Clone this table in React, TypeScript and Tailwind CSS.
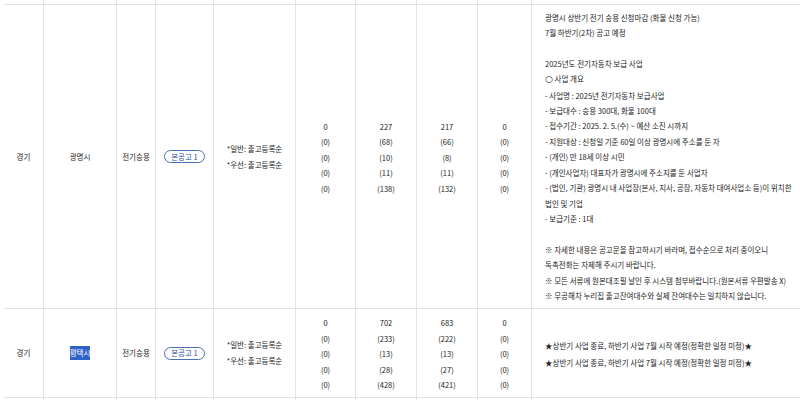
const COLS = 'grid grid-cols-[40px_73px_39px_58px_82px_60px_61px_61px_54px_268px]'
const CELL = 'border-r border-[#e3e3e3] flex items-center justify-center text-center'

type Row = {
  region: string
  city: string
  highlight?: boolean
  nums: string[][]
  notes: React.ReactNode
  height: string
}

const rows: Row[] = [
  {
    region: '경기',
    city: '광명시',
    nums: [
      ['0', '(0)', '(0)', '(0)', '(0)'],
      ['227', '(68)', '(10)', '(11)', '(138)'],
      ['217', '(66)', '(8)', '(11)', '(132)'],
      ['0', '(0)', '(0)', '(0)', '(0)'],
    ],
    height: 'h-[304px]',
    notes: (
      <div className="leading-[15.4px]">
        <p>광명시 상반기 전기 승용 신청마감 (화물 신청 가능)</p>
        <p>7월 하반기(2차) 공고 예정</p>
        <p>&nbsp;</p>
        <p>2025년도 전기자동차 보급 사업</p>
        <p>
          <span className="text-[9px]" style={{ fontFamily: '"DejaVu Sans", sans-serif' }}>○</span> 사업 개요
        </p>
        <p>- 사업명 : 2025년 전기자동차 보급사업</p>
        <p>- 보급대수 : 승용 300대, 화물 100대</p>
        <p>- 접수기간 : 2025. 2. 5.(수) ~ 예산 소진 시까지</p>
        <p>- 지원대상 : 신청일 기준 60일 이상 광명시에 주소를 둔 자</p>
        <p>- (개인) 만 18세 이상 시민</p>
        <p>- (개인사업자) 대표자가 광명시에 주소지를 둔 사업자</p>
        <p>- (법인, 기관) 광명시 내 사업장(본사, 지사, 공장, 자동차 대여사업소 등)이 위치한</p>
        <p>법인 및 기업</p>
        <p>- 보급기준 : 1대</p>
        <p>&nbsp;</p>
        <p>※ 자세한 내용은 공고문을 참고하시기 바라며, 접수순으로 처리 중이오니</p>
        <p>독촉전화는 자제해 주시기 바랍니다.</p>
        <p>※ 모든 서류에 원본대조필 날인 후 시스템 첨부바랍니다.(원본서류 우편발송 X)</p>
        <p>※ 무공해차 누리집 출고잔여대수와 실제 잔여대수는 일치하지 않습니다.</p>
      </div>
    ),
  },
  {
    region: '경기',
    city: '평택시',
    highlight: true,
    nums: [
      ['0', '(0)', '(0)', '(0)', '(0)'],
      ['702', '(233)', '(13)', '(28)', '(428)'],
      ['683', '(222)', '(13)', '(27)', '(421)'],
      ['0', '(0)', '(0)', '(0)', '(0)'],
    ],
    height: 'h-[89px]',
    notes: (
      <div className="leading-[17px] pt-[2px]">
        <p>★상반기 사업 종료, 하반기 사업 7월 시작 예정(정확한 일정 미정)★</p>
        <p>★상반기 사업 종료, 하반기 사업 7월 시작 예정(정확한 일정 미정)★</p>
      </div>
    ),
  },
]

function SliverRow({ top }: { top?: boolean }) {
  return (
    <div className={`${COLS} ${top ? 'h-[5px] border-b border-[#e3e3e3]' : 'h-[10px]'}`}>
      {Array.from({ length: 10 }).map((_, i) => (
        <div key={i} className={i < 9 ? 'border-r border-[#e3e3e3]' : ''} />
      ))}
    </div>
  )
}

export default function App() {
  return (
    <div
      className="w-[800px] h-[400px] overflow-hidden bg-white pl-[4px] text-[7.5px] text-[#222]"
      style={{ fontFamily: '"Noto Sans CJK KR", "Noto Sans", sans-serif' }}
    >
      <SliverRow top />
      {rows.map((row) => (
        <div key={row.city} className={`${COLS} ${row.height} border-b border-[#e3e3e3]`}>
          <div className={CELL}>{row.region}</div>
          <div className={CELL}>
            {row.highlight ? (
              <span className="inline-block h-[14px] leading-[14px] bg-[#2f62c9] text-white">{row.city}</span>
            ) : (
              row.city
            )}
          </div>
          <div className={CELL}>전기승용</div>
          <div className={CELL}>
            <span className="inline-flex h-[13px] items-center rounded-full border border-[#4b6cb7] px-[6px] text-[#2d4f9c]">
              본공고 1
            </span>
          </div>
          <div className={CELL}>
            <div className="leading-[16px] text-left">
              <p>*일반: 출고등록순</p>
              <p>*우선: 출고등록순</p>
            </div>
          </div>
          {row.nums.map((col, i) => (
            <div key={i} className={CELL}>
              <div className="leading-[15.4px] pt-[2px]">
                {col.map((n, j) => (
                  <p key={j}>{n}</p>
                ))}
              </div>
            </div>
          ))}
          <div className="flex items-center pl-[13px] pr-[4px]">{row.notes}</div>
        </div>
      ))}
      <SliverRow />
    </div>
  )
}
